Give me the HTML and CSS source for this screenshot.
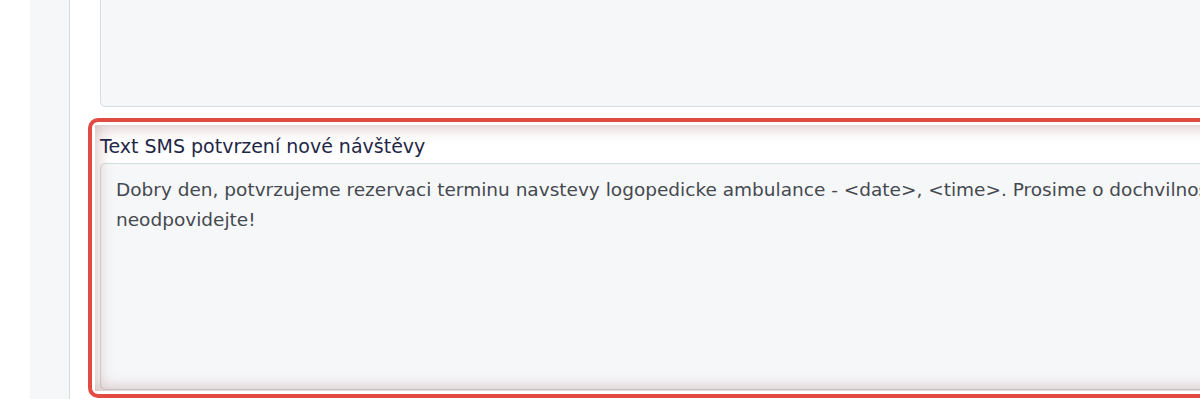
FILE: index.html
```html
<!DOCTYPE html>
<html lang="cs">
<head>
    <meta charset="UTF-8">
    <meta name="viewport" content="width=device-width, initial-scale=1.0">
    <title>Nastavení SMS</title>
    <link rel="stylesheet" href="styles.css">
</head>
<body>
    <div class="layout">
        <aside class="gutter"></aside>
        <main class="panel">
            <div class="field field-prev">
                <textarea class="input" rows="4"></textarea>
            </div>

            <div class="field highlight">
                <label class="field-label" for="smsNew">Text SMS potvrzení nové návštěvy</label>
                <textarea class="input" id="smsNew" rows="7">Dobry den, potvrzujeme rezervaci terminu navstevy logopedicke ambulance - &lt;date&gt;, &lt;time&gt;. Prosime o dochvilnost a na tuto SMS neodpovidejte!</textarea>
            </div>
        </main>
    </div>
</body>
</html>
```

FILE: styles.css
```css
:root {
    --label-color: #1f2747;
    --text-color: #45494f;
    --input-bg: #f6f7f9;
    --input-border: #d3dede;
    --side-bg: #f6f7f9;
    --accent-red: #e24b42;
}

* {
    box-sizing: border-box;
    margin: 0;
    padding: 0;
}

html, body {
    height: 100%;
    overflow: hidden;
}

body {
    font-family: 'DejaVu Sans', 'Noto Sans', sans-serif;
    background: #fff;
    color: var(--text-color);
}

.layout {
    display: flex;
    min-height: 100%;
    padding-left: 30px;
}

.gutter {
    flex: 0 0 40px;
    background: var(--side-bg);
    border-right: 1px solid var(--input-border);
}

.panel {
    flex: 0 0 1360px;
    padding: 0 0 0 30px;
    display: flex;
    flex-direction: column;
    gap: 18px;
}

.field {
    display: flex;
    flex-direction: column;
}

.field-prev {
    margin-top: -20px;
}

.field-prev .input {
    height: 127px;
}

.input {
    width: 100%;
    font-family: inherit;
    font-size: 18.5px;
    line-height: 30px;
    color: var(--text-color);
    background: var(--input-bg);
    border: 1px solid var(--input-border);
    border-radius: 5px;
    padding: 11px 15px;
    resize: vertical;
    outline: none;
}

.highlight {
    position: relative;
    margin-left: -5px;
    padding: 5px 0 1px 5px;
    outline: 4px solid var(--accent-red);
    outline-offset: 3px;
    border-radius: 3px;
}

.highlight::after {
    content: "";
    position: absolute;
    inset: 0;
    pointer-events: none;
    box-shadow: inset 0 0 18px rgba(120, 45, 45, 0.36);
}

.field-label {
    font-size: 19px;
    line-height: 32px;
    color: var(--label-color);
    margin-bottom: 1px;
}

.highlight .input {
    height: 227px;
}
```
